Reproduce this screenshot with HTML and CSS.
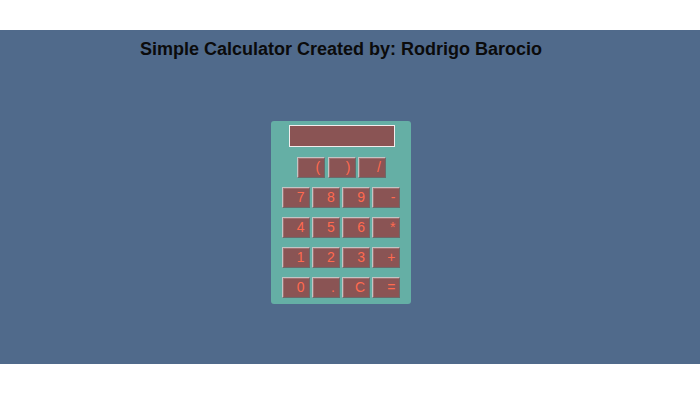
FILE: index.html
```html
<!DOCTYPE html>
<html>
<head>
<meta charset="utf-8">
<link rel="stylesheet" href="styles.css">
</head>
<body>
<div class="top-gap"></div>
<main class="stage">
  <h1 class="title">Simple Calculator Created by: Rodrigo Barocio</h1>
  <div class="calc">
    <div class="display"></div>
    <div class="row first">
      <button class="key">(</button>
      <button class="key">)</button>
      <button class="key">/</button>
    </div>
    <div class="row">
      <button class="key">7</button>
      <button class="key">8</button>
      <button class="key">9</button>
      <button class="key">-</button>
    </div>
    <div class="row">
      <button class="key">4</button>
      <button class="key">5</button>
      <button class="key">6</button>
      <button class="key">*</button>
    </div>
    <div class="row">
      <button class="key">1</button>
      <button class="key">2</button>
      <button class="key">3</button>
      <button class="key">+</button>
    </div>
    <div class="row">
      <button class="key">0</button>
      <button class="key">.</button>
      <button class="key">C</button>
      <button class="key">=</button>
    </div>
  </div>
</main>
</body>
</html>
```

FILE: styles.css
```css
html, body {
  margin: 0;
  padding: 0;
  background: #ffffff;
  font-family: "Liberation Sans", Arial, sans-serif;
}
.top-gap {
  height: 30px;
}
.stage {
  height: 334px;
  background: #506a8b;
  display: flex;
  flex-direction: column;
  align-items: center;
  padding-right: 18px;
  box-sizing: border-box;
}
.title {
  margin: 9px 0 0 0;
  font-size: 18px;
  line-height: 21px;
  font-weight: bold;
  color: #0b0b0b;
}
.calc {
  margin-top: 61px;
  width: 140px;
  background: #65afa5;
  border-radius: 3px;
  padding: 4px 0 6px 0;
  display: flex;
  flex-direction: column;
  align-items: center;
  box-sizing: border-box;
}
.display {
  width: 106px;
  height: 22px;
  box-sizing: border-box;
  background: #8a5454;
  border: 1px solid #f2ecec;
  margin-left: 1px;
}
.row {
  display: flex;
  gap: 2.3px;
  margin-top: 10px;
}
.row.first {
  margin-left: 1px;
}
.row + .row {
  margin-top: 9px;
}
.key {
  width: 28px;
  height: 21px;
  box-sizing: border-box;
  margin: 0;
  padding: 0 4px 0 0;
  background: #8a5454;
  border: 1px solid;
  border-color: #c4c4c4 #6a6a6a #6a6a6a #c4c4c4;
  box-shadow: inset 1px 1px 0 #a07070;
  color: #ff6a4f;
  font-family: "Liberation Sans", Arial, sans-serif;
  font-size: 14px;
  text-align: right;
  line-height: 19px;
}
```
